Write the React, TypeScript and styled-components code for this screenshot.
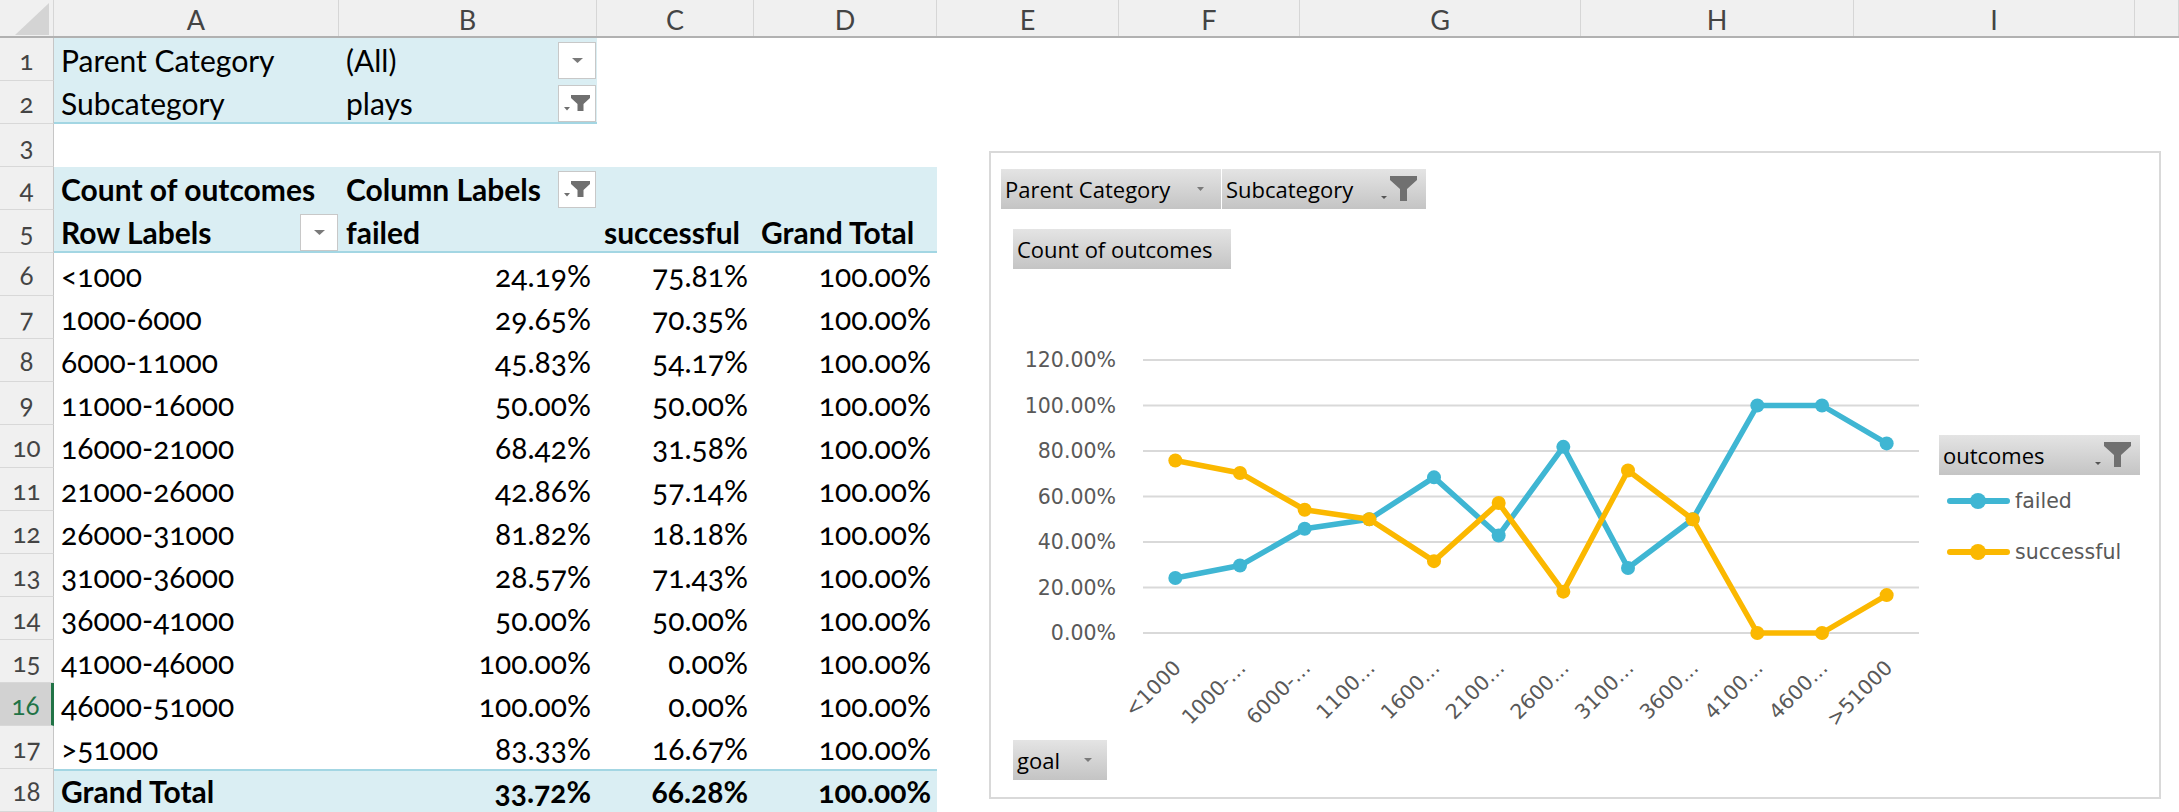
import React from "react";
import styled, { createGlobalStyle, css } from "styled-components";

const GlobalStyle = createGlobalStyle`
  html, body { margin: 0; padding: 0; background: #ffffff; }
  body { font-family: Lato, "Open Sans", sans-serif; overflow: hidden; }
`;

const TEMPLATE = "54px 285px 258px 157px 183px 182px 181px 281px 273px 281px 1fr";
const LETTERS = ["A", "B", "C", "D", "E", "F", "G", "H", "I", "J"];

const Sheet = styled.div`
  position: relative;
  width: 2179px;
  height: 812px;
  overflow: hidden;
  background: #ffffff;
`;

const HeaderRow = styled.div`
  display: grid;
  grid-template-columns: ${TEMPLATE};
  height: 38px;
  box-sizing: border-box;
  background: #f0f0f0;
  border-bottom: 2px solid #b1b1b1;
`;

const Corner = styled.div`
  display: flex;
  align-items: flex-end;
  justify-content: flex-end;
  padding: 0 4px 1px 0;
  border-right: 1px solid #d6d6d6;
`;

const CornerTriangle = styled.div`
  width: 34px;
  height: 32px;
  background: #d4d4d4;
  clip-path: polygon(100% 0, 100% 100%, 0 100%);
`;

const ColHeader = styled.div`
  display: flex;
  align-items: center;
  justify-content: center;
  padding-top: 2px;
  border-right: 1px solid #d6d6d6;
  font-family: Lato, sans-serif;
  font-size: 27px;
  color: #444444;
`;

const Row = styled.div`
  display: grid;
  grid-template-columns: ${TEMPLATE};
  height: 43px;
`;

const RowNum = styled.div<{ $selected?: boolean }>`
  display: flex;
  align-items: flex-end;
  justify-content: center;
  padding-bottom: 4px;
  box-sizing: border-box;
  background: #f0f0f0;
  border-bottom: 1px solid #d8d8d8;
  border-right: 1px solid #c6c6c6;
  font-family: Lato, sans-serif;
  font-size: 26px;
  line-height: 32px;
  color: #444444;
  font-variant-numeric: oldstyle-nums;
  ${(p) =>
    p.$selected &&
    css`
      background: #d2d2d2;
      color: #217346;
      border-right: 3px solid #217346;
    `}
`;

const Cell = styled.div<{
  $pivot?: boolean;
  $bold?: boolean;
  $right?: boolean;
  $line?: "top" | "bottom";
}>`
  display: flex;
  align-items: flex-end;
  justify-content: ${(p) => (p.$right ? "flex-end" : "flex-start")};
  min-width: 0;
  padding: 0 6px 3px 7px;
  box-sizing: border-box;
  white-space: nowrap;
  font-family: Lato, sans-serif;
  font-size: 30px;
  line-height: 36px;
  font-weight: ${(p) => (p.$bold ? 700 : 400)};
  font-variant-numeric: oldstyle-nums;
  color: #000000;
  background: ${(p) => (p.$pivot ? "#daeef3" : "transparent")};
  box-shadow: ${(p) =>
    p.$line === "bottom"
      ? "inset 0 -2px 0 #a3d6e3"
      : p.$line === "top"
      ? "inset 0 2px 0 #a3d6e3"
      : "none"};
`;

const CellButton = styled.span`
  margin-left: auto;
  margin-right: -5px;
  margin-bottom: -1px;
  align-self: flex-end;
  flex: none;
  width: 38px;
  height: 37px;
  box-sizing: border-box;
  border: 1px solid #c8c8c8;
  background: #ffffff;
  display: flex;
  align-items: center;
  justify-content: center;
`;

/* ---------- chart ---------- */

const ChartBox = styled.div`
  position: absolute;
  left: 989px;
  top: 151px;
  width: 1172px;
  height: 648px;
  box-sizing: border-box;
  border: 2px solid #d9d9d9;
  background: #ffffff;
  padding: 16px 0 0 10px;
  display: flex;
  flex-direction: column;
  align-items: flex-start;
`;

const FieldRow = styled.div`
  display: flex;
  gap: 1px;
`;

const FieldButton = styled.div<{ $w: number; $pr?: number }>`
  width: ${(p) => p.$w}px;
  height: 40px;
  box-sizing: border-box;
  padding: 0 ${(p) => p.$pr ?? 4}px 0 4px;
  display: flex;
  align-items: center;
  justify-content: space-between;
  background: linear-gradient(#e4e4e4, #c4c4c4);
  font-family: "Open Sans", sans-serif;
  font-size: 22px;
  color: #000000;
  white-space: nowrap;
`;

const CountButton = styled(FieldButton)`
  margin: 20px 0 0 12px;
`;

const GoalButton = styled(FieldButton)`
  margin-left: 12px;
`;

const ChartBody = styled.div`
  display: flex;
  align-items: flex-start;
  height: 471px;
  margin-left: -10px;
`;

const Legend = styled.div`
  display: flex;
  flex-direction: column;
  margin-left: 8px;
  padding-top: 166px;
`;

const LegendItem = styled.div`
  height: 51px;
  display: flex;
  align-items: center;
  gap: 5px;
  padding-left: 8px;
  font-family: "DejaVu Sans", sans-serif;
  font-size: 20.5px;
  color: #595959;
`;

const BLUE = "#3fb6d3";
const GOLD = "#fbb800";

const DropArrow = ({ w = 11, h = 5 }: { w?: number; h?: number }) => (
  <svg width={w} height={h} viewBox={`0 0 ${w} ${h}`}>
    <polygon points={`0,0 ${w},0 ${w / 2},${h}`} fill="#7a7a7a" />
  </svg>
);

const CellFilter = () => (
  <svg width="26" height="17" viewBox="0 0 26 17">
    <polygon points="0,12 6,12 3,15.5" fill="#6f6f6f" />
    <polygon points="7,0 26,0 26,3 19.5,9 19.5,16 13.5,16 13.5,9 7,3" fill="#6f6f6f" />
  </svg>
);

const ChartFilter = () => (
  <svg width="36" height="26" viewBox="0 0 36 26">
    <polygon points="0,20 6,20 3,23" fill="#555555" />
    <polygon points="9,0 36,0 36,4 26,13 26,25 19,25 19,13 9,4" fill="#707070" />
  </svg>
);

const LegendSwatch = ({ color }: { color: string }) => (
  <svg width="63" height="20" viewBox="0 0 63 20">
    <line x1="3" y1="10" x2="60" y2="10" stroke={color} strokeWidth="6" strokeLinecap="round" />
    <circle cx="31" cy="10" r="8" fill={color} />
  </svg>
);

const failed = [24.19, 29.65, 45.83, 50, 68.42, 42.86, 81.82, 28.57, 50, 100, 100, 83.33];
const success = [75.81, 70.35, 54.17, 50, 31.58, 57.14, 18.18, 71.43, 50, 0, 0, 16.67];
const ranges = [
  "<1000",
  "1000-6000",
  "6000-11000",
  "11000-16000",
  "16000-21000",
  "21000-26000",
  "26000-31000",
  "31000-36000",
  "36000-41000",
  "41000-46000",
  "46000-51000",
  ">51000",
];
const axisLabels = [
  "<1000",
  "1000-…",
  "6000-…",
  "1100…",
  "1600…",
  "2100…",
  "2600…",
  "3100…",
  "3600…",
  "4100…",
  "4600…",
  ">51000",
];

const PX0 = 152;
const PW = 776;
const Y0 = 364;
const YS = 273 / 120;
const cx = (i: number) => PX0 + (PW / 12) * (i + 0.5);
const cy = (v: number) => Y0 - v * YS;

const PlotSvg = () => {
  const ticks = [0, 20, 40, 60, 80, 100, 120];
  const pts = (arr: number[]) => arr.map((v, i) => `${cx(i)},${cy(v)}`).join(" ");
  return (
    <svg width="940" height="471" viewBox="0 0 940 471">
      {ticks.map((t) => (
        <g key={t}>
          <line x1={PX0} x2={PX0 + PW} y1={cy(t)} y2={cy(t)} stroke="#d9d9d9" strokeWidth="2" />
          <text
            x="125"
            y={cy(t)}
            textAnchor="end"
            dominantBaseline="central"
            fontFamily="DejaVu Sans, sans-serif"
            fontSize="20.5"
            fill="#595959"
          >
            {t.toFixed(2)}%
          </text>
        </g>
      ))}
      {axisLabels.map((l, i) => (
        <text
          key={l}
          transform={`translate(${cx(i) + 7},${400}) rotate(-45)`}
          textAnchor="end"
          fontFamily="DejaVu Sans, sans-serif"
          fontSize="20.5"
          fill="#595959"
        >
          {l}
        </text>
      ))}
      <polyline points={pts(failed)} fill="none" stroke={BLUE} strokeWidth="5.5" strokeLinejoin="round" />
      {failed.map((v, i) => (
        <circle key={`f${i}`} cx={cx(i)} cy={cy(v)} r="7" fill={BLUE} />
      ))}
      <polyline points={pts(success)} fill="none" stroke={GOLD} strokeWidth="5.5" strokeLinejoin="round" />
      {success.map((v, i) => (
        <circle key={`s${i}`} cx={cx(i)} cy={cy(v)} r="7" fill={GOLD} />
      ))}
    </svg>
  );
};

/* ---------- sheet data ---------- */

type Spec = {
  text?: string;
  pivot?: boolean;
  bold?: boolean;
  right?: boolean;
  line?: "top" | "bottom";
  btn?: "drop" | "filter";
};

const fmt = (v: number) => `${v.toFixed(2)}%`;

const rows: Spec[][] = [
  [
    { text: "Parent Category", pivot: true },
    { text: "(All)", pivot: true, btn: "drop" },
  ],
  [
    { text: "Subcategory", pivot: true, line: "bottom" },
    { text: "plays", pivot: true, btn: "filter", line: "bottom" },
  ],
  [],
  [
    { text: "Count of outcomes", pivot: true, bold: true },
    { text: "Column Labels", pivot: true, bold: true, btn: "filter" },
    { pivot: true },
    { pivot: true },
  ],
  [
    { text: "Row Labels", pivot: true, bold: true, btn: "drop", line: "bottom" },
    { text: "failed", pivot: true, bold: true, line: "bottom" },
    { text: "successful", pivot: true, bold: true, line: "bottom" },
    { text: "Grand Total", pivot: true, bold: true, line: "bottom" },
  ],
  ...ranges.map((r, i) => [
    { text: r },
    { text: fmt(failed[i]), right: true },
    { text: fmt(success[i]), right: true },
    { text: "100.00%", right: true },
  ]),
  [
    { text: "Grand Total", pivot: true, bold: true, line: "top" as const },
    { text: "33.72%", pivot: true, bold: true, right: true, line: "top" as const },
    { text: "66.28%", pivot: true, bold: true, right: true, line: "top" as const },
    { text: "100.00%", pivot: true, bold: true, right: true, line: "top" as const },
  ],
];

export default function App() {
  return (
    <>
      <GlobalStyle />
      <Sheet>
        <HeaderRow>
          <Corner>
            <CornerTriangle />
          </Corner>
          {LETTERS.map((l) => (
            <ColHeader key={l}>{l === "J" ? "" : l}</ColHeader>
          ))}
        </HeaderRow>
        {rows.map((cells, r) => (
          <Row key={r}>
            <RowNum $selected={r === 15}>{r + 1}</RowNum>
            {LETTERS.map((_, c) => {
              const s = cells[c] || {};
              return (
                <Cell key={c} $pivot={s.pivot} $bold={s.bold} $right={s.right} $line={s.line}>
                  {s.text}
                  {s.btn && (
                    <CellButton>{s.btn === "drop" ? <DropArrow /> : <CellFilter />}</CellButton>
                  )}
                </Cell>
              );
            })}
          </Row>
        ))}

        <ChartBox>
          <FieldRow>
            <FieldButton $w={220} $pr={17}>
              Parent Category
              <DropArrow w={7} h={4} />
            </FieldButton>
            <FieldButton $w={204} $pr={9}>
              Subcategory
              <ChartFilter />
            </FieldButton>
          </FieldRow>
          <CountButton $w={218}>Count of outcomes</CountButton>
          <ChartBody>
            <PlotSvg />
            <Legend>
              <FieldButton $w={201} $pr={9}>
                outcomes
                <ChartFilter />
              </FieldButton>
              <LegendItem>
                <LegendSwatch color={BLUE} />
                failed
              </LegendItem>
              <LegendItem>
                <LegendSwatch color={GOLD} />
                successful
              </LegendItem>
            </Legend>
          </ChartBody>
          <GoalButton $w={94} $pr={15}>
            goal
            <DropArrow w={8} h={4} />
          </GoalButton>
        </ChartBox>
      </Sheet>
    </>
  );
}
